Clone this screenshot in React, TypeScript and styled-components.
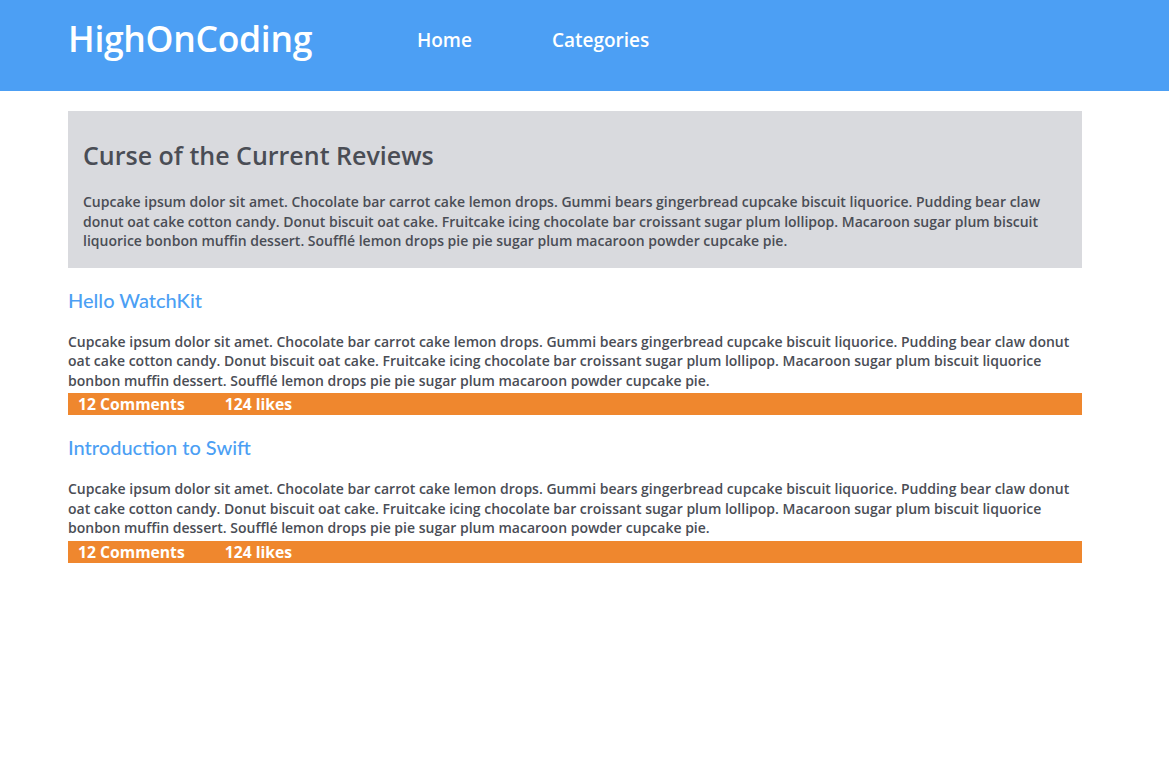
import React from "react";
import styled, { createGlobalStyle } from "styled-components";

const Global = createGlobalStyle`
  html, body { margin: 0; padding: 0; background: #fff; }
  body { font-family: "Open Sans", "Liberation Sans", sans-serif; }
`;

const Header = styled.header`
  background: #4c9ff4;
  height: 91px;
  display: flex;
  align-items: center;
  padding: 0 68px;
  box-sizing: border-box;
`;

const Logo = styled.div`
  color: #fff;
  font-size: 35.5px;
  font-weight: 600;
  letter-spacing: -0.3px;
  margin-top: -15px;
  width: 349px;
`;

const Nav = styled.nav`
  display: flex;
  gap: 80px;
  margin-top: -12px;
`;

const NavLink = styled.a`
  color: #fff;
  font-size: 19px;
  font-weight: 600;
  text-decoration: none;
`;

const Main = styled.main`
  width: 1014px;
  margin: 20px 0 0 68px;
`;

const Hero = styled.section`
  background: #d9dade;
  padding: 26px 15px 17px;
`;

const HeroTitle = styled.h1`
  margin: 0 0 19px;
  font-size: 25px;
  font-weight: 600;
  color: #4a4d55;
  line-height: 36px;
`;

const Text = styled.p`
  margin: 0;
  font-size: 14px;
  font-weight: 600;
  color: #4a4d55;
  line-height: 19.5px;
`;

const Post = styled.article`
  margin-top: 19px;
`;

const PostTitle = styled.h2`
  margin: 0 0 19px;
  font-family: Lato, "Open Sans", sans-serif;
  font-size: 20px;
  font-weight: 500;
  color: #4c9ff4;
  line-height: 26px;
`;

const Meta = styled.div`
  background: #ef872e;
  height: 22px;
  display: flex;
  align-items: center;
  gap: 40px;
  padding: 0 10px;
  margin-top: 3px;
`;

const MetaItem = styled.span`
  color: #fff;
  font-size: 15.7px;
  font-weight: 700;
`;

const lorem =
  "Cupcake ipsum dolor sit amet. Chocolate bar carrot cake lemon drops. Gummi bears gingerbread cupcake biscuit liquorice. Pudding bear claw donut oat cake cotton candy. Donut biscuit oat cake. Fruitcake icing chocolate bar croissant sugar plum lollipop. Macaroon sugar plum biscuit liquorice bonbon muffin dessert. Soufflé lemon drops pie pie sugar plum macaroon powder cupcake pie.";

const posts = [
  { title: "Hello WatchKit", comments: 12, likes: 124 },
  { title: "Introduction to Swift", comments: 12, likes: 124 },
];

export default function App() {
  return (
    <>
      <Global />
      <Header>
        <Logo>HighOnCoding</Logo>
        <Nav>
          <NavLink href="#">Home</NavLink>
          <NavLink href="#">Categories</NavLink>
        </Nav>
      </Header>
      <Main>
        <Hero>
          <HeroTitle>Curse of the Current Reviews</HeroTitle>
          <Text>{lorem}</Text>
        </Hero>
        {posts.map((p) => (
          <Post key={p.title}>
            <PostTitle>{p.title}</PostTitle>
            <Text>{lorem}</Text>
            <Meta>
              <MetaItem>{p.comments} Comments</MetaItem>
              <MetaItem>{p.likes} likes</MetaItem>
            </Meta>
          </Post>
        ))}
      </Main>
    </>
  );
}
